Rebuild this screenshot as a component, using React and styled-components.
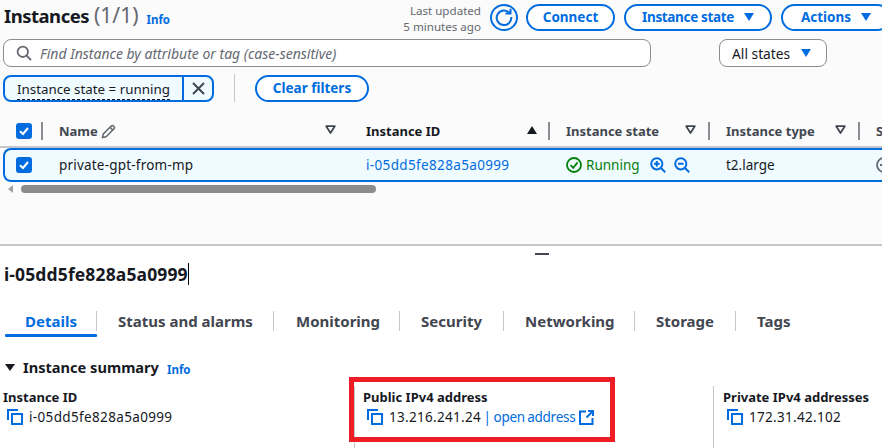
import React from "react";
import styled, { createGlobalStyle } from "styled-components";

const Global = createGlobalStyle`
  html, body { margin: 0; padding: 0; background: #fff; }
  body { width: 882px; height: 448px; overflow: hidden; font-family: "Noto Sans", "Open Sans", Arial, sans-serif; color: #16191f; }
  * { box-sizing: border-box; }
`;

const BLUE = "#006ce0";

const Page = styled.div`width: 882px; height: 448px; overflow: hidden; display: flex; flex-direction: column; position: relative;`;
const Top = styled.section`height: 246px; flex: none; background: #fbfbfb; border-bottom: 2px solid #c6c6cd; overflow: hidden; padding-top: 3px;`;
const HeaderRow = styled.div`display: flex; align-items: center; width: 891px; height: 28px; padding-left: 4px;`;
const Title = styled.h1`margin: 0 0 4px; font-size: 18.5px; line-height: 24px; font-weight: 700; letter-spacing: -0.5px; color: #16191f; white-space: nowrap; display: flex; align-items: baseline;`;
const Count = styled.span`font-size: 21px; font-weight: 400; color: #656871; margin-left: 5px; letter-spacing: 0;`;
const Info = styled.span`color: ${BLUE}; font-size: 11.5px; font-weight: 700; margin-left: ${p => p.$ml || 8}px; position: relative; top: 2px;`;
const Updated = styled.div`margin-left: auto; width: 120px; padding-top: 3px; text-align: right; font-size: 11.6px; line-height: 16px; color: #656871;`;
const RefreshBtn = styled.div`width: 28px; height: 27px; margin-left: 9px; border: 2px solid ${BLUE}; border-radius: 50%; display: flex; align-items: center; justify-content: center;`;
const Pill = styled.div`height: 27px; margin-left: ${p => p.$ml || 9}px; width: ${p => p.$w}px; flex: none; border: 2px solid ${BLUE}; border-radius: 14px; background: #fff; color: ${BLUE}; font-size: 13.5px; font-weight: 700; letter-spacing: ${p => p.$ls || 0}px; display: flex; align-items: center; justify-content: center; gap: 10px;`;
const Caret = styled.span`width: 0; height: 0; border-left: 5.5px solid transparent; border-right: 5.5px solid transparent; border-top: 8px solid ${BLUE}; display: inline-block; flex: none;`;

const SearchRow = styled.div`display: flex; margin-top: 8px; padding-left: 3px;`;
const Search = styled.div`width: 648px; height: 28px; border: 1px solid #8c8c94; border-radius: 8px; background: #fff; display: flex; align-items: center; padding-left: 12px; gap: 8px; font-style: italic; font-size: 14px; color: #656871;`;
const StateSelect = styled.div`margin-left: 68px; width: 108px; height: 28px; border: 1px solid #8c8c94; border-radius: 8px; background: #fff; display: flex; align-items: center; padding-left: 12px; gap: 11px; font-size: 13.8px; color: #16191f;`;

const FilterRow = styled.div`display: flex; align-items: center; margin-top: 7px; padding-left: 3px; height: 28px;`;
const Chip = styled.div`width: 211px; height: 27px; border: 2px solid ${BLUE}; border-radius: 8px; background: #f0fbff; display: flex; align-items: stretch;`;
const ChipText = styled.div`flex: 1; padding: 2px 0 0 12px; font-size: 13.35px; line-height: 20px; color: #16191f; white-space: nowrap; border-right: 2px solid ${BLUE};`;
const Dotted = styled.span`border-bottom: 1px dashed #16191f; display: inline-block; line-height: 19px;`;
const ChipClose = styled.div`width: 28px; display: flex; align-items: center; justify-content: center;`;
const VRule = styled.div`width: 1px; height: 28px; background: #c6c6cd; margin: 0 20px;`;
const ClearBtn = styled(Pill)`margin-left: 0;`;

const Table = styled.div`margin-top: 18px; width: 930px;`;
const HeadRow = styled.div`display: flex; align-items: center; border-bottom: 2px solid #c6c6cd; height: 28px; padding-bottom: 4px;`;
const Cell = styled.div`flex: none; width: ${p => p.$w}px; display: flex; align-items: center; height: 18px; position: relative; padding-left: ${p => p.$pl ?? 16}px; font-size: 13px; font-weight: 700; color: ${p => p.$color || "#414750"}; white-space: nowrap;
  ${p => p.$rule ? `&::after { content: ""; position: absolute; right: 0; top: 0; height: 18px; width: 2px; background: #8c8c94; }` : ""}
`;
const SortTri = styled.span`position: absolute; right: 13px; top: 4px; width: 0; height: 0; border-left: 5.5px solid transparent; border-right: 5.5px solid transparent; border-bottom: 8px solid #16191f;`;
const Funnel = styled.svg`position: absolute; right: 14px; top: 3px;`;
const Check = styled.div`width: 16px; height: 16px; border-radius: 3px; background: ${BLUE}; margin-left: ${p => p.$ml}px; display: flex; align-items: center; justify-content: center; flex: none;`;
const SelRow = styled.div`display: flex; align-items: center; height: 34px; margin-left: 3px; background: #f0fbff; border: 2px solid ${BLUE}; border-right: none; border-radius: 8px 0 0 8px;`;
const BodyCell = styled.div`flex: none; width: ${p => p.$w}px; padding-left: ${p => p.$pl ?? 16}px; font-size: 13.5px; letter-spacing: ${p => p.$ls || 0}px; color: ${p => p.$color || "#16191f"}; white-space: nowrap; display: flex; align-items: center; gap: ${p => p.$gap || 0}px;`;
const Spacer = styled.span`width: ${p => p.$w}px; flex: none;`;
const ScrollWrap = styled.div`display: flex; align-items: center; height: 8px; margin-top: 3px; padding-left: 8px;`;
const ScrollArrow = styled.span`width: 0; height: 0; border-top: 4px solid transparent; border-bottom: 4px solid transparent; border-right: 5px solid #a0a0a0; margin-right: 8px;`;
const ScrollThumb = styled.div`width: 355px; height: 8px; border-radius: 4px; background: #8c8c8c;`;

const Bottom = styled.section`flex: 1; position: relative; background: #fff; padding-top: 7px;`;
const Handle = styled.div`width: 14px; height: 2px; background: #424650; margin-left: 535px;`;
const DetailTitle = styled.h2`margin: 8px 0 0 4px; font-size: 17.5px; line-height: 22px; font-weight: 700; color: #16191f; letter-spacing: 0.13px; display: flex;`;
const TextCaret = styled.span`width: 1px; height: 22px; background: #000;`;
const Tabs = styled.div`display: flex; margin-top: 26px; height: 24px; padding-left: 5px;`;
const Tab = styled.div`flex: none; width: ${p => p.$w}px; height: 20px; padding-left: ${p => p.$pl}px; font-size: 15px; line-height: 20px; font-weight: 700; color: ${p => p.$active ? BLUE : "#424650"}; white-space: nowrap; border-right: ${p => p.$last ? "none" : "1px solid #c6c6cd"}; position: relative;
  ${p => p.$active ? `&::after { content: ""; position: absolute; left: 0; right: -1px; bottom: -6px; height: 3px; background: ${BLUE}; border-radius: 1px; }` : ""}
`;
const SummaryHead = styled.div`display: flex; align-items: center; margin-top: 21px; padding-left: 5px; height: 22px;`;
const Tri = styled.span`width: 0; height: 0; border-left: 5px solid transparent; border-right: 5px solid transparent; border-top: 7px solid #16191f; margin-right: 8px;`;
const SummaryTitle = styled.h3`margin: 0; font-size: 14.6px; font-weight: 700; color: #16191f;`;
const Grid = styled.div`display: grid; grid-template-columns: 351px 359px 1fr; margin-top: 8px; padding-left: 3px;`;
const Col = styled.div`min-height: 80px; padding-left: ${p => p.$pl || 0}px; ${p => p.$rule ? "border-left: 1px solid #c6c6cd;" : ""} padding-top: 2px;`;
const Label = styled.div`font-size: 13px; line-height: 18px; font-weight: 700; color: #16191f;`;
const Value = styled.div`display: flex; align-items: center; margin-top: 2px; font-size: 13.5px; line-height: 18px; color: #16191f; padding-left: 4px; gap: 6px; white-space: nowrap;`;
const Spaced = styled.span`letter-spacing: ${p => p.$ls || 0}px;`;
const Address = styled.span`word-spacing: -1px;`;
const Link = styled.span`color: ${BLUE}; letter-spacing: ${p => p.$ls || 0}px;`;
const External = styled.svg`margin-left: -2px;`;
const Annotation = styled.div`position: absolute; left: 349px; top: 131px; width: 266px; height: 65px; border: 5.5px solid #ee1c25; pointer-events: none;`;

const CheckIcon = () => (
  <svg width="12" height="12" viewBox="0 0 12 12" fill="none"><path d="M2 6.2 5 9l5-6" stroke="#fff" strokeWidth="2" /></svg>
);
const CopyIcon = () => (
  <svg width="16" height="16" viewBox="0 0 16 16" fill="none" stroke={BLUE} strokeWidth="2"><path d="M1 11V1h10" /><rect x="5" y="5" width="10" height="10" /></svg>
);
const FunnelIcon = () => (
  <Funnel width="11" height="10" viewBox="0 0 11 10" fill="none"><path d="M1.2 1.2h8.6L5.5 8z" stroke="#414750" strokeWidth="1.8" strokeLinejoin="round" /></Funnel>
);
const Zoom = ({ plus }) => (
  <svg width="16" height="16" viewBox="0 0 16 16" fill="none" stroke={BLUE} strokeWidth="2"><circle cx="6.8" cy="6.8" r="5.6" /><path d="M11 11l4.2 4.2M4 6.8h5.6" />{plus && <path d="M6.8 4v5.6" />}</svg>
);

export default function App() {
  return (
    <Page>
      <Global />
      <Top>
        <HeaderRow>
          <Title>Instances<Count>(1/1)</Count></Title>
          <Info>Info</Info>
          <Updated>Last updated<br />5 minutes ago</Updated>
          <RefreshBtn>
            <svg width="18" height="18" viewBox="0 0 18 18" fill="none" stroke={BLUE} strokeWidth="2"><path d="M14.6 5A7.3 7.3 0 1 0 16.3 9" /><path d="M10.5 5.6h5V.8" /></svg>
          </RefreshBtn>
          <Pill $w={89} $ml={8}>Connect</Pill>
          <Pill $w={148} $ls={-0.35}>Instance state <Caret /></Pill>
          <Pill $w={110}>Actions <Caret /></Pill>
        </HeaderRow>
        <SearchRow>
          <Search>
            <svg width="16" height="16" viewBox="0 0 16 16" fill="none" stroke="#656871" strokeWidth="1.8"><circle cx="6.8" cy="6.8" r="5.2" /><path d="M10.6 10.6l4.4 4.4" /></svg>
            Find Instance by attribute or tag (case-sensitive)
          </Search>
          <StateSelect>All states <Caret /></StateSelect>
        </SearchRow>
        <FilterRow>
          <Chip>
            <ChipText><Dotted>Instance state = running</Dotted></ChipText>
            <ChipClose>
              <svg width="13" height="13" viewBox="0 0 13 13" fill="none" stroke="#424650" strokeWidth="2"><path d="M1 1l11 11M12 1 1 12" /></svg>
            </ChipClose>
          </Chip>
          <VRule />
          <ClearBtn $w={114}>Clear filters</ClearBtn>
        </FilterRow>
        <Table>
          <HeadRow>
            <Cell $w={43} $pl={0} $rule><Check $ml={16}><CheckIcon /></Check></Cell>
            <Cell $w={307}>
              Name&nbsp;
              <svg width="15" height="15" viewBox="0 0 15 15" fill="none" stroke="#656871" strokeWidth="1.5"><path d="M1.5 13.5l.8-3.6L10 2.2a1.6 1.6 0 0 1 2.8 2.8L5.1 12.7z" /><path d="M9 3.2l2.8 2.8" /></svg>
              <FunnelIcon />
            </Cell>
            <Cell $w={200} $rule $color="#16191f">Instance ID<SortTri /></Cell>
            <Cell $w={160} $rule>Instance state<FunnelIcon /></Cell>
            <Cell $w={150} $rule>Instance type<FunnelIcon /></Cell>
            <Cell $w={70}>St</Cell>
          </HeadRow>
          <SelRow>
            <BodyCell $w={38} $pl={0}><Check $ml={11}><CheckIcon /></Check></BodyCell>
            <BodyCell $w={307} $ls={0.2}>private-gpt-from-mp</BodyCell>
            <BodyCell $w={200} $color={BLUE} $ls={0.35}>i-05dd5fe828a5a0999</BodyCell>
            <BodyCell $w={160} $color="#037f0c" $gap={4}>
              <svg width="16" height="16" viewBox="0 0 16 16" fill="none" stroke="#037f0c" strokeWidth="1.8"><circle cx="8" cy="8" r="7" /><path d="M4.6 8.2 7.2 10.8 11.6 5.4" /></svg>
              Running
              <Spacer $w={2} />
              <Zoom plus />
              <Spacer $w={0} />
              <Zoom />
            </BodyCell>
            <BodyCell $w={150}>t2.large</BodyCell>
            <BodyCell $w={60}>
              <svg width="16" height="16" viewBox="0 0 16 16" fill="none" stroke="#656871" strokeWidth="1.8"><circle cx="8" cy="8" r="7" /><path d="M4 8h8" /></svg>
            </BodyCell>
          </SelRow>
          <ScrollWrap><ScrollArrow /><ScrollThumb /></ScrollWrap>
        </Table>
      </Top>
      <Bottom>
        <Handle />
        <DetailTitle>i-05dd5fe828a5a0999<TextCaret /></DetailTitle>
        <Tabs>
          <Tab $w={92} $pl={20} $active>Details</Tab>
          <Tab $w={177} $pl={21}>Status and alarms</Tab>
          <Tab $w={126} $pl={22}>Monitoring</Tab>
          <Tab $w={104} $pl={21}>Security</Tab>
          <Tab $w={131} $pl={21}>Networking</Tab>
          <Tab $w={101} $pl={21}>Storage</Tab>
          <Tab $w={70} $pl={21} $last>Tags</Tab>
        </Tabs>
        <SummaryHead>
          <Tri />
          <SummaryTitle>Instance summary</SummaryTitle>
          <Info $ml={8}>Info</Info>
        </SummaryHead>
        <Grid>
          <Col>
            <Label>Instance ID</Label>
            <Value><CopyIcon /><Spaced $ls={0.35}>i-05dd5fe828a5a0999</Spaced></Value>
          </Col>
          <Col $rule $pl={8}>
            <Label>Public IPv4 address</Label>
            <Value>
              <CopyIcon />
              <Address><Spaced $ls={0.3}>13.216.241.24</Spaced> <Link>|</Link> <Link $ls={-0.25}>open address</Link></Address>
              <External width="15" height="15" viewBox="0 0 15 15" fill="none" stroke={BLUE} strokeWidth="2"><path d="M7 1.5H1v12.5h12.5V8" /><path d="M9 1h5v5M14 1 7.5 7.5" /></External>
            </Value>
          </Col>
          <Col $rule $pl={9}>
            <Label>Private IPv4 addresses</Label>
            <Value><CopyIcon /><Spaced $ls={0.3}>172.31.42.102</Spaced></Value>
          </Col>
        </Grid>
        <Annotation />
      </Bottom>
    </Page>
  );
}
